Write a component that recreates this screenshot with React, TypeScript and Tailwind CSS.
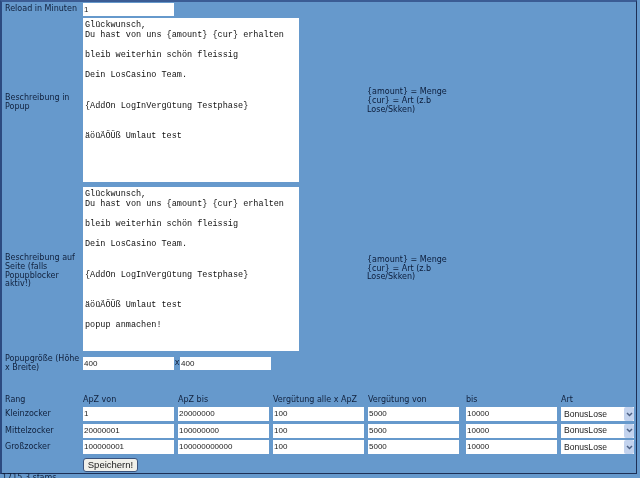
const popup = `Glückwunsch,
Du hast von uns {amount} {cur} erhalten

bleib weiterhin schön fleissig

Dein LosCasino Team.


{AddOn LogInVergütung Testphase}


äöüÄÖÜß Umlaut test`;

const page = popup + `

popup anmachen!`;

const hint = (
  <div className="w-[90px] text-[#0b1c3a]">
    {"{amount} = Menge"}
    <br />
    {"{cur} = Art (z.b Lose/Skken)"}
  </div>
);

const rows = [
  ["Kleinzocker", "1", "20000000", "100", "5000", "10000"],
  ["Mittelzocker", "20000001", "100000000", "100", "5000", "10000"],
  ["Großzocker", "100000001", "100000000000", "100", "5000", "10000"],
];

const field = "h-[14px] w-[91px] bg-white px-[1px] font-['Liberation_Sans',sans-serif] text-[8px] leading-[14px] text-[#222] outline-none";
const small = "h-[13px] w-[91px] bg-white px-[1px] font-['Liberation_Sans',sans-serif] text-[8px] leading-[13px] text-[#222] outline-none";
const area = "h-[164px] w-[216px] resize-none overflow-hidden bg-white px-[2px] pt-[2px] font-['Liberation_Mono',monospace] text-[8.5px] leading-[10.1px] text-[#111] outline-none";

export default function App() {
  return (
    <div className="flex h-[478px] w-[640px] flex-col overflow-hidden bg-[#6699cc] font-['DejaVu_Sans',sans-serif] text-[8px] leading-[8.8px] text-[#10203c] blur-[0.3px]">
      <div className="h-[474px] w-[637px] shrink-0 border-t-2 border-r border-b border-l-2 border-t-[#3b5c94] border-r-[#1d2f55] border-b-[#1d2f55] border-l-[#2c4a80] pl-[3px]">
        <div className="flex h-[14px] items-center">
          <span className="w-[78px]">Reload in Minuten</span>
          <input className={small} defaultValue="1" />
        </div>
        <div className="mt-[2px] flex h-[164px] items-center">
          <span className="mt-[6px] w-[78px]">Beschreibung in Popup</span>
          <textarea className={area} defaultValue={popup} />
          <div className="ml-[68px] mt-[3px]">{hint}</div>
        </div>
        <div className="mt-[5px] flex h-[164px] items-center">
          <span className="mt-[5px] w-[78px]">Beschreibung auf Seite (falls Popupblocker aktiv!)</span>
          <textarea className={area} defaultValue={page} />
          <div className="ml-[68px]">{hint}</div>
        </div>
        <div className="mt-[5px] flex h-[15px] items-center">
          <span className="w-[78px]">Popupgröße (Höhe x Breite)</span>
          <input className={small} defaultValue="400" />
          <span className="w-[6px] text-center">x</span>
          <input className={small} defaultValue="400" />
        </div>
        <div className="mt-[23.5px] grid grid-cols-[78px_95px_95px_95px_98px_95px_73px] gap-y-[2.5px]">
          <span className="h-[10px] pt-[1px]">Rang</span>
          <span className="pt-[1px]">ApZ von</span>
          <span className="pt-[1px]">ApZ bis</span>
          <span className="pt-[1px]">Vergütung alle x ApZ</span>
          <span className="pt-[1px]">Vergütung von</span>
          <span className="pt-[1px]">bis</span>
          <span className="pt-[1px]">Art</span>
          {rows.map((r) => (
            <div key={r[0]} className="contents">
              <span className="self-center pt-[1px]">{r[0]}</span>
              {r.slice(1).map((v, i) => (
                <input key={i} className={field} defaultValue={v} />
              ))}
              <div className="flex h-[14px] w-[73px] items-center justify-between bg-white pl-[3px] font-['Liberation_Sans',sans-serif] text-[8.6px] text-[#222]">
                BonusLose
                <span className="flex h-[14px] w-[10px] items-center justify-center rounded-[2px] bg-[#c3d3ee]">
                  <svg width="7" height="5" viewBox="0 0 7 5"><path d="M1 1l2.500 2.500L6 1" fill="none" stroke="#4d6185" strokeWidth="1.500" /></svg>
                </span>
              </div>
            </div>
          ))}
          <span />
          <button className="mt-[1px] h-[14px] w-[55px] rounded-[3px] border border-[#39527c] bg-[#f0f0ea] font-['Liberation_Sans',sans-serif] text-[9.5px] leading-none text-[#222]">Speichern!</button>
        </div>
      </div>
      <div className="pl-[2px] text-[8px] leading-[8px] text-[#10203c]">1715.3 sfams</div>
    </div>
  );
}
